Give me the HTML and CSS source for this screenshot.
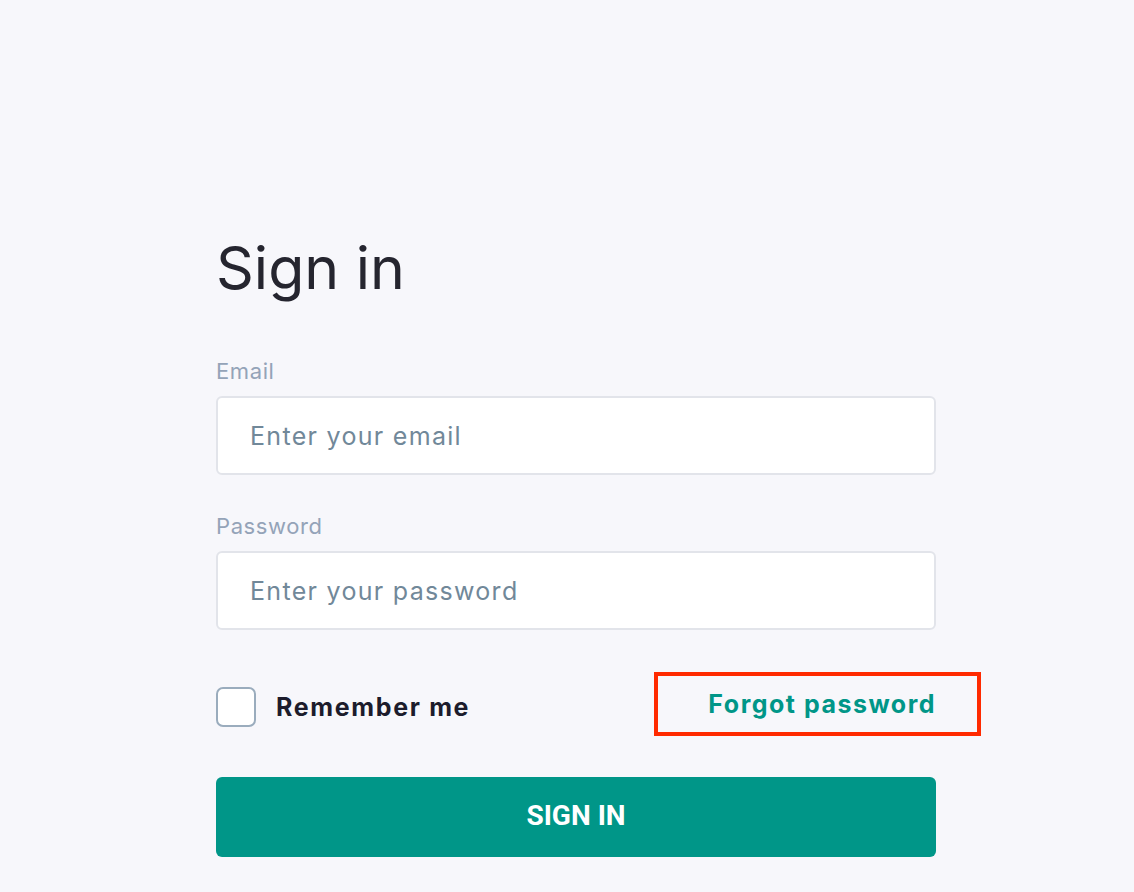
FILE: index.html
```html
<!DOCTYPE html>
<html lang="en">
<head>
<meta charset="utf-8">
<title>Sign in</title>
<link rel="stylesheet" href="styles.css">
</head>
<body>
<main class="page">
  <form class="signin">
    <h1 class="title">Sign in</h1>
    <label class="field">
      <span class="label">Email</span>
      <input class="input" type="email" placeholder="Enter your email">
    </label>
    <label class="field">
      <span class="label">Password</span>
      <input class="input" type="password" placeholder="Enter your password">
    </label>
    <div class="row">
      <label class="remember">
        <span class="box"></span>
        <span class="remember-text">Remember me</span>
      </label>
      <a class="forgot" href="#">Forgot password<span class="highlight"></span></a>
    </div>
    <button class="submit" type="button">SIGN IN</button>
  </form>
</main>
</body>
</html>
```
FILE: styles.css
```css
html, body {
  margin: 0;
  padding: 0;
  background: #f7f7fb;
}
body {
  font-family: Inter, "Liberation Sans", sans-serif;
}
.page {
  padding: 232px 0 0 216px;
}
.signin {
  width: 720px;
  display: flex;
  flex-direction: column;
}
.title {
  margin: 0 0 54px;
  font-size: 59px;
  line-height: 72px;
  font-weight: 400;
  color: #25252f;
}
.field {
  display: flex;
  flex-direction: column;
  margin-bottom: 38px;
}
.label {
  font-size: 22px;
  line-height: 26px;
  letter-spacing: 0.6px;
  color: #94a3b8;
  margin-bottom: 12px;
}
.input {
  box-sizing: border-box;
  height: 79px;
  border: 2px solid #e2e4ea;
  border-radius: 6px;
  background: #fff;
  padding: 0 32px;
  font-family: Inter, "Liberation Sans", sans-serif;
  font-size: 25px;
  letter-spacing: 1.3px;
  color: #2a3342;
  outline: none;
}
.input::placeholder {
  color: #718899;
}
.row {
  display: flex;
  justify-content: space-between;
  align-items: center;
  margin-top: 19px;
  margin-bottom: 50px;
}
.remember {
  display: flex;
  align-items: center;
  gap: 20px;
}
.box {
  box-sizing: border-box;
  width: 40px;
  height: 40px;
  border: 2px solid #9aacbd;
  border-radius: 7px;
  background: #fff;
}
.remember-text {
  font-size: 25px;
  font-weight: 700;
  letter-spacing: 1.65px;
  color: #1c1c2c;
}
.forgot {
  position: relative;
  font-size: 25px;
  line-height: 32px;
  font-weight: 700;
  letter-spacing: 1.5px;
  color: #009688;
  text-decoration: none;
  margin-top: -7px;
}
.highlight {
  position: absolute;
  left: -54px;
  right: -45px;
  top: -16px;
  bottom: -16px;
  border: 4px solid #ff2a00;
  pointer-events: none;
}
.submit {
  height: 80px;
  padding: 0 0 3px;
  border: none;
  border-radius: 6px;
  background: #009688;
  color: #fff;
  font-family: Roboto, Inter, sans-serif;
  font-size: 28px;
  font-weight: 700;
  cursor: pointer;
}
```
